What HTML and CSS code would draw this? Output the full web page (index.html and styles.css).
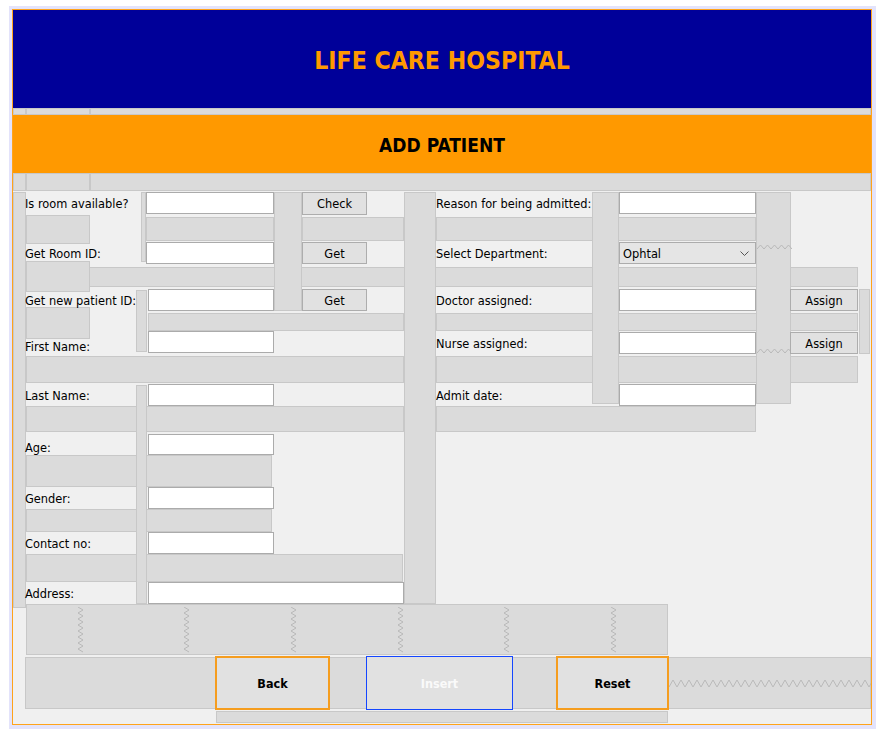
FILE: index.html
```html
<!DOCTYPE html>
<html>

<head lang="en">
    <meta charset="UTF-8">
    <title>Add Patient</title>
    <link rel="stylesheet" href="styles.css">
</head>

<body>
    <div class="frame">
        <div class="panel">
            <!-- header -->
            <div class="title">LIFE CARE HOSPITAL</div>
            <div class="gap strip1-a"></div>
            <div class="gap strip1-b"></div>
            <div class="gap strip1-c"></div>
            <div class="subtitle">ADD PATIENT</div>
            <div class="gap strip2-a"></div>
            <div class="gap strip2-b"></div>
            <div class="gap strip2-c"></div>

            <!-- horizontal gaps between rows -->
            <div class="gap bar r1-lab"></div>
            <div class="gap bar r1-field"></div>
            <div class="gap bar r1-btn"></div>
            <div class="gap bar r1-right"></div>
            <div class="gap bar r2-wide"></div>
            <div class="gap r2-lab"></div>
            <div class="gap bar r3-left"></div>
            <div class="gap bar r3-right"></div>
            <div class="gap r3-lab"></div>
            <div class="gap bar r4-left"></div>
            <div class="gap bar r4-right"></div>
            <div class="gap r5-left"></div>
            <div class="gap r5-right"></div>
            <div class="gap r6"></div>
            <div class="gap r7"></div>
            <div class="gap r8"></div>

            <!-- vertical gaps -->
            <div class="gap v-left"></div>
            <div class="gap v-room"></div>
            <div class="gap v-btns"></div>
            <div class="gap v-mid"></div>
            <div class="gap v-id"></div>
            <div class="gap v-names"></div>
            <div class="gap v-right1"></div>
            <div class="gap v-right2">
                <svg class="zz-h" width="35" height="7"><polyline points="0,5 3.5,1 7,5 10.5,1 14,5 17.5,1 21,5 24.5,1 28,5 31.5,1 35,5" /></svg>
                <svg class="zz-h" width="35" height="7"><polyline points="0,5 3.5,1 7,5 10.5,1 14,5 17.5,1 21,5 24.5,1 28,5 31.5,1 35,5" /></svg>
            </div>
            <div class="gap v-edge"></div>

            <!-- springs under the form -->
            <div class="gap springs">
                <div class="spring"><svg width="7" height="46"><polyline points="1,0 6,3 1,6 6,9 1,12 6,15 1,18 6,21 1,24 6,27 1,30 6,33 1,36 6,39 1,42 6,45" /></svg></div>
                <div class="spring"><svg width="7" height="46"><polyline points="1,0 6,3 1,6 6,9 1,12 6,15 1,18 6,21 1,24 6,27 1,30 6,33 1,36 6,39 1,42 6,45" /></svg></div>
                <div class="spring"><svg width="7" height="46"><polyline points="1,0 6,3 1,6 6,9 1,12 6,15 1,18 6,21 1,24 6,27 1,30 6,33 1,36 6,39 1,42 6,45" /></svg></div>
                <div class="spring"><svg width="7" height="46"><polyline points="1,0 6,3 1,6 6,9 1,12 6,15 1,18 6,21 1,24 6,27 1,30 6,33 1,36 6,39 1,42 6,45" /></svg></div>
                <div class="spring"><svg width="7" height="46"><polyline points="1,0 6,3 1,6 6,9 1,12 6,15 1,18 6,21 1,24 6,27 1,30 6,33 1,36 6,39 1,42 6,45" /></svg></div>
                <div class="spring"><svg width="7" height="46"><polyline points="1,0 6,3 1,6 6,9 1,12 6,15 1,18 6,21 1,24 6,27 1,30 6,33 1,36 6,39 1,42 6,45" /></svg></div>
            </div>
            <div class="gap bottom-bar"></div>
            <div class="bottom-spring">
                <svg width="202" height="9">
                    <defs>
                        <pattern id="zz" width="8" height="9" patternUnits="userSpaceOnUse">
                            <polyline points="0,8 4,1 8,8" />
                        </pattern>
                    </defs>
                    <rect width="202" height="9" fill="url(#zz)" />
                </svg>
            </div>
            <div class="gap bottom-strip"></div>

            <!-- left column -->
            <div class="lab l-room">Is room available?</div>
            <div class="field f-room"></div>
            <div class="btn b-check">Check</div>

            <div class="lab l-roomid">Get Room ID:</div>
            <div class="field f-roomid"></div>
            <div class="btn b-get1">Get</div>

            <div class="lab l-pid">Get new patient ID:</div>
            <div class="field f-pid"></div>
            <div class="btn b-get2">Get</div>

            <div class="lab lab-end l-first">First Name:</div>
            <div class="field f-first"></div>

            <div class="lab l-last">Last Name:</div>
            <div class="field f-last"></div>

            <div class="lab lab-end l-age">Age:</div>
            <div class="field f-age"></div>

            <div class="lab l-gender">Gender:</div>
            <div class="field f-gender"></div>

            <div class="lab l-contact">Contact no:</div>
            <div class="field f-contact"></div>

            <div class="lab l-address">Address:</div>
            <div class="field f-address"></div>

            <!-- right column -->
            <div class="lab l-reason">Reason for being admitted:</div>
            <div class="field f-reason"></div>

            <div class="lab l-dept">Select Department:</div>
            <div class="combo f-dept">
                <span>Ophtal</span>
                <svg width="9" height="5"><polyline points="0.5,0.5 4.5,4.5 8.5,0.5" /></svg>
            </div>

            <div class="lab l-doctor">Doctor assigned:</div>
            <div class="field f-doctor"></div>
            <div class="btn b-assign1">Assign</div>

            <div class="lab l-nurse">Nurse assigned:</div>
            <div class="field f-nurse"></div>
            <div class="btn b-assign2">Assign</div>

            <div class="lab l-admit">Admit date:</div>
            <div class="field f-admit"></div>

            <!-- actions -->
            <div class="action back">Back</div>
            <div class="action insert">Insert</div>
            <div class="action reset">Reset</div>
        </div>
    </div>
</body>

</html>
```

FILE: styles.css
```css
* {
    margin: 0;
    padding: 0;
}

body {
    background: #fff;
    font-family: "DejaVu Sans", "Liberation Sans", sans-serif;
    font-size: 11.4px;
    color: #000;
}

.frame {
    margin: 6px 0 0 9px;
    width: 867px;
    height: 723px;
    padding: 3px 4px 4px 3px;
    box-sizing: border-box;
    background: #e3e3fb;
}

/* grid lines follow the GridBag cells of the form */
.panel {
    width: 860px;
    height: 716px;
    box-sizing: border-box;
    border: 1px solid #ffa31a;
    background: #f0f0f0;
    display: grid;
    grid-template-columns: 13px 64px 46px 5px 5px 2px 68px 58px 28px 28px 37px 37px 32px 77px 43px 36px 27px 49px 88px 35px 67px 13px;
    grid-template-rows: 98px 7px 58px 19px 23px 27px 22px 25px 22px 21px 22px 30px 22px 27px 22px 32px 22px 23px 22px 28px 22px 52px 54px 14px;
}

.title {
    grid-column: 1 / -1;
    grid-row: 1 / 2;
    background: #000099;
    color: #ff9900;
    font-family: "DejaVu Sans Condensed", "DejaVu Sans", sans-serif;
    font-weight: bold;
    font-size: 24.6px;
    display: flex;
    align-items: center;
    justify-content: center;
    padding-top: 3px;
}

.subtitle {
    grid-column: 1 / -1;
    grid-row: 3 / 4;
    background: #ff9900;
    font-family: "DejaVu Sans Condensed", "DejaVu Sans", sans-serif;
    font-weight: bold;
    font-size: 19px;
    display: flex;
    align-items: center;
    justify-content: center;
    padding-top: 1px;
}

/* gap markers of the designer */
.gap {
    background: #dbdbdb;
    border: 1px solid #c8c8c8;
    box-sizing: border-box;
}

.bar {
    margin: 2px 0 1px;
}

.strip1-a { grid-column: 1 / 2; grid-row: 2 / 3; }
.strip1-b { grid-column: 2 / 3; grid-row: 2 / 3; }
.strip1-c { grid-column: 3 / -1; grid-row: 2 / 3; }
.strip2-a { grid-column: 1 / 2; grid-row: 4 / 5; margin-bottom: 1px; }
.strip2-b { grid-column: 2 / 3; grid-row: 4 / 5; margin-bottom: 1px; }
.strip2-c { grid-column: 3 / -1; grid-row: 4 / 5; margin-bottom: 1px; }

.r1-lab { grid-column: 2 / 3; grid-row: 6 / 7; margin: 0 0 -2px; }
.r1-field { grid-column: 6 / 9; grid-row: 6 / 7; }
.r1-btn { grid-column: 10 / 13; grid-row: 6 / 7; }
.r1-right { grid-column: 14 / 20; grid-row: 6 / 7; }

.r2-wide { grid-column: 2 / 22; grid-row: 8 / 9; margin: 3px 0 2px; }
.r2-lab { grid-column: 2 / 3; grid-row: 8 / 9; margin: -3px 0 -3px; }

.r3-lab { grid-column: 2 / 3; grid-row: 10 / 11; margin: -4px 0 -7px; }
.r3-left { grid-column: 7 / 13; grid-row: 10 / 11; }
.r3-right { grid-column: 14 / 22; grid-row: 10 / 11; }

.r4-left { grid-column: 2 / 13; grid-row: 12 / 13; }
.r4-right { grid-column: 14 / 22; grid-row: 12 / 13; }

.r5-left { grid-column: 2 / 13; grid-row: 14 / 15; margin-bottom: 1px; }
.r5-right { grid-column: 14 / 20; grid-row: 14 / 15; margin-bottom: 1px; }

.r6 { grid-column: 2 / 9; grid-row: 16 / 17; margin-right: 2px; }
.r7 { grid-column: 2 / 9; grid-row: 18 / 19; margin-right: 2px; }
.r8 { grid-column: 2 / 13; grid-row: 20 / 21; margin-right: 1px; }

.v-left { grid-column: 1 / 2; grid-row: 5 / 22; margin-bottom: -4px; }
.v-room { grid-column: 5 / 6; grid-row: 5 / 8; margin-bottom: 2px; }
.v-btns { grid-column: 9 / 10; grid-row: 5 / 10; }
.v-mid { grid-column: 13 / 14; grid-row: 5 / 22; }
.v-id { grid-column: 4 / 7; grid-row: 9 / 12; margin: 1px 1px 2px 0; }
.v-names { grid-column: 4 / 7; grid-row: 13 / 22; margin: 1px 1px 0 0; }
.v-right1 { grid-column: 17 / 18; grid-row: 5 / 14; margin-bottom: 2px; }
.v-right2 {
    grid-column: 20 / 21;
    grid-row: 5 / 14;
    margin-bottom: 2px;
    display: flex;
    flex-direction: column;
    justify-content: space-between;
    padding: 51px 0 48px;
}
.v-edge { grid-column: 22 / 23; grid-row: 9 / 12; margin: 0 1px 0 1px; }

.zz-h polyline,
.spring polyline,
.bottom-spring polyline {
    fill: none;
    stroke: #b9b9b9;
    stroke-width: 1;
}

.springs {
    grid-column: 2 / 19;
    grid-row: 22 / 23;
    display: grid;
    grid-template-columns: repeat(6, 1fr);
    margin-bottom: 1px;
}

.spring {
    display: flex;
    align-items: center;
    justify-content: center;
}

.bottom-bar { grid-column: 2 / -1; grid-row: 23 / 24; margin: 1px 0 1px -1px; }
.bottom-spring {
    grid-column: 19 / -1;
    grid-row: 23 / 24;
    align-self: center;
    display: flex;
    padding-left: 1px;
}
.bottom-strip { grid-column: 8 / 19; grid-row: 24 / 25; margin: 1px 0 1px; }

/* labels */
.lab {
    align-self: center;
    white-space: nowrap;
    line-height: 14px;
    position: relative;
    padding-top: 1px;
}

.lab-end {
    align-self: end;
}

.l-room { grid-column: 2 / 5; grid-row: 5 / 6; margin-left: -1px; }
.l-roomid { grid-column: 2 / 5; grid-row: 7 / 8; margin-left: -1px; }
.l-pid { grid-column: 2 / 4; grid-row: 9 / 10; margin-left: -1px; }
.l-first { grid-column: 2 / 4; grid-row: 11 / 12; margin-left: -1px; }
.l-last { grid-column: 2 / 4; grid-row: 13 / 14; margin-left: -1px; }
.l-age { grid-column: 2 / 4; grid-row: 15 / 16; margin-left: -1px; }
.l-gender { grid-column: 2 / 4; grid-row: 17 / 18; margin-left: -1px; }
.l-contact { grid-column: 2 / 4; grid-row: 19 / 20; margin-left: -1px; }
.l-address { grid-column: 2 / 4; grid-row: 21 / 22; margin-left: -1px; }

.l-reason { grid-column: 14 / 17; grid-row: 5 / 6; }
.l-dept { grid-column: 14 / 17; grid-row: 7 / 8; }
.l-doctor { grid-column: 14 / 17; grid-row: 9 / 10; }
.l-nurse { grid-column: 14 / 17; grid-row: 11 / 12; }
.l-admit { grid-column: 14 / 17; grid-row: 13 / 14; }

/* text fields */
.field {
    background: #fff;
    border: 1px solid #ababab;
    box-sizing: border-box;
    height: 22px;
    align-self: start;
}

.f-room { grid-column: 6 / 9; grid-row: 5 / 6; }
.f-roomid { grid-column: 6 / 9; grid-row: 7 / 8; }
.f-pid { grid-column: 7 / 9; grid-row: 9 / 10; }
.f-first { grid-column: 7 / 9; grid-row: 11 / 12; margin-top: -1px; }
.f-last { grid-column: 7 / 9; grid-row: 13 / 14; }
.f-age { grid-column: 7 / 9; grid-row: 15 / 16; margin-top: 1px; height: 21px; }
.f-gender { grid-column: 7 / 9; grid-row: 17 / 18; }
.f-contact { grid-column: 7 / 9; grid-row: 19 / 20; }
.f-address { grid-column: 7 / 13; grid-row: 21 / 22; }

.f-reason { grid-column: 18 / 20; grid-row: 5 / 6; }
.f-doctor { grid-column: 18 / 20; grid-row: 9 / 10; }
.f-nurse { grid-column: 18 / 20; grid-row: 11 / 12; }
.f-admit { grid-column: 18 / 20; grid-row: 13 / 14; }

.combo {
    grid-column: 18 / 20;
    grid-row: 7 / 8;
    height: 22px;
    background: #e5e5e5;
    border: 1px solid #acacac;
    box-sizing: border-box;
    display: flex;
    align-items: center;
    justify-content: space-between;
    padding: 1px 6px 0 3px;
}

.combo polyline {
    fill: none;
    stroke: #555;
    stroke-width: 1;
}

/* small buttons */
.btn {
    background: #e1e1e1;
    border: 1px solid #adadad;
    box-sizing: border-box;
    display: flex;
    align-items: center;
    justify-content: center;
    padding-top: 1px;
}

.b-check { grid-column: 10 / 12; grid-row: 5 / 6; }
.b-get1 { grid-column: 10 / 12; grid-row: 7 / 8; }
.b-get2 { grid-column: 10 / 12; grid-row: 9 / 10; }
.b-assign1 { grid-column: 21 / 22; grid-row: 9 / 10; margin-left: -1px; }
.b-assign2 { grid-column: 21 / 22; grid-row: 11 / 12; margin-left: -1px; }

/* action buttons */
.action {
    grid-row: 23 / 24;
    background: #e1e1e1;
    box-sizing: border-box;
    display: flex;
    align-items: center;
    justify-content: center;
    font-family: "DejaVu Sans Condensed", "DejaVu Sans", sans-serif;
    font-weight: bold;
    font-size: 12.5px;
}

.back {
    grid-column: 8 / 11;
    border: 2px solid #f59d1f;
    margin-left: -1px;
}

.insert {
    grid-column: 12 / 15;
    border: 1px solid #1446ff;
    color: #fafafa;
    margin-left: -1px;
}

.reset {
    grid-column: 16 / 19;
    border: 2px solid #f59d1f;
    margin-right: -1px;
}
```
